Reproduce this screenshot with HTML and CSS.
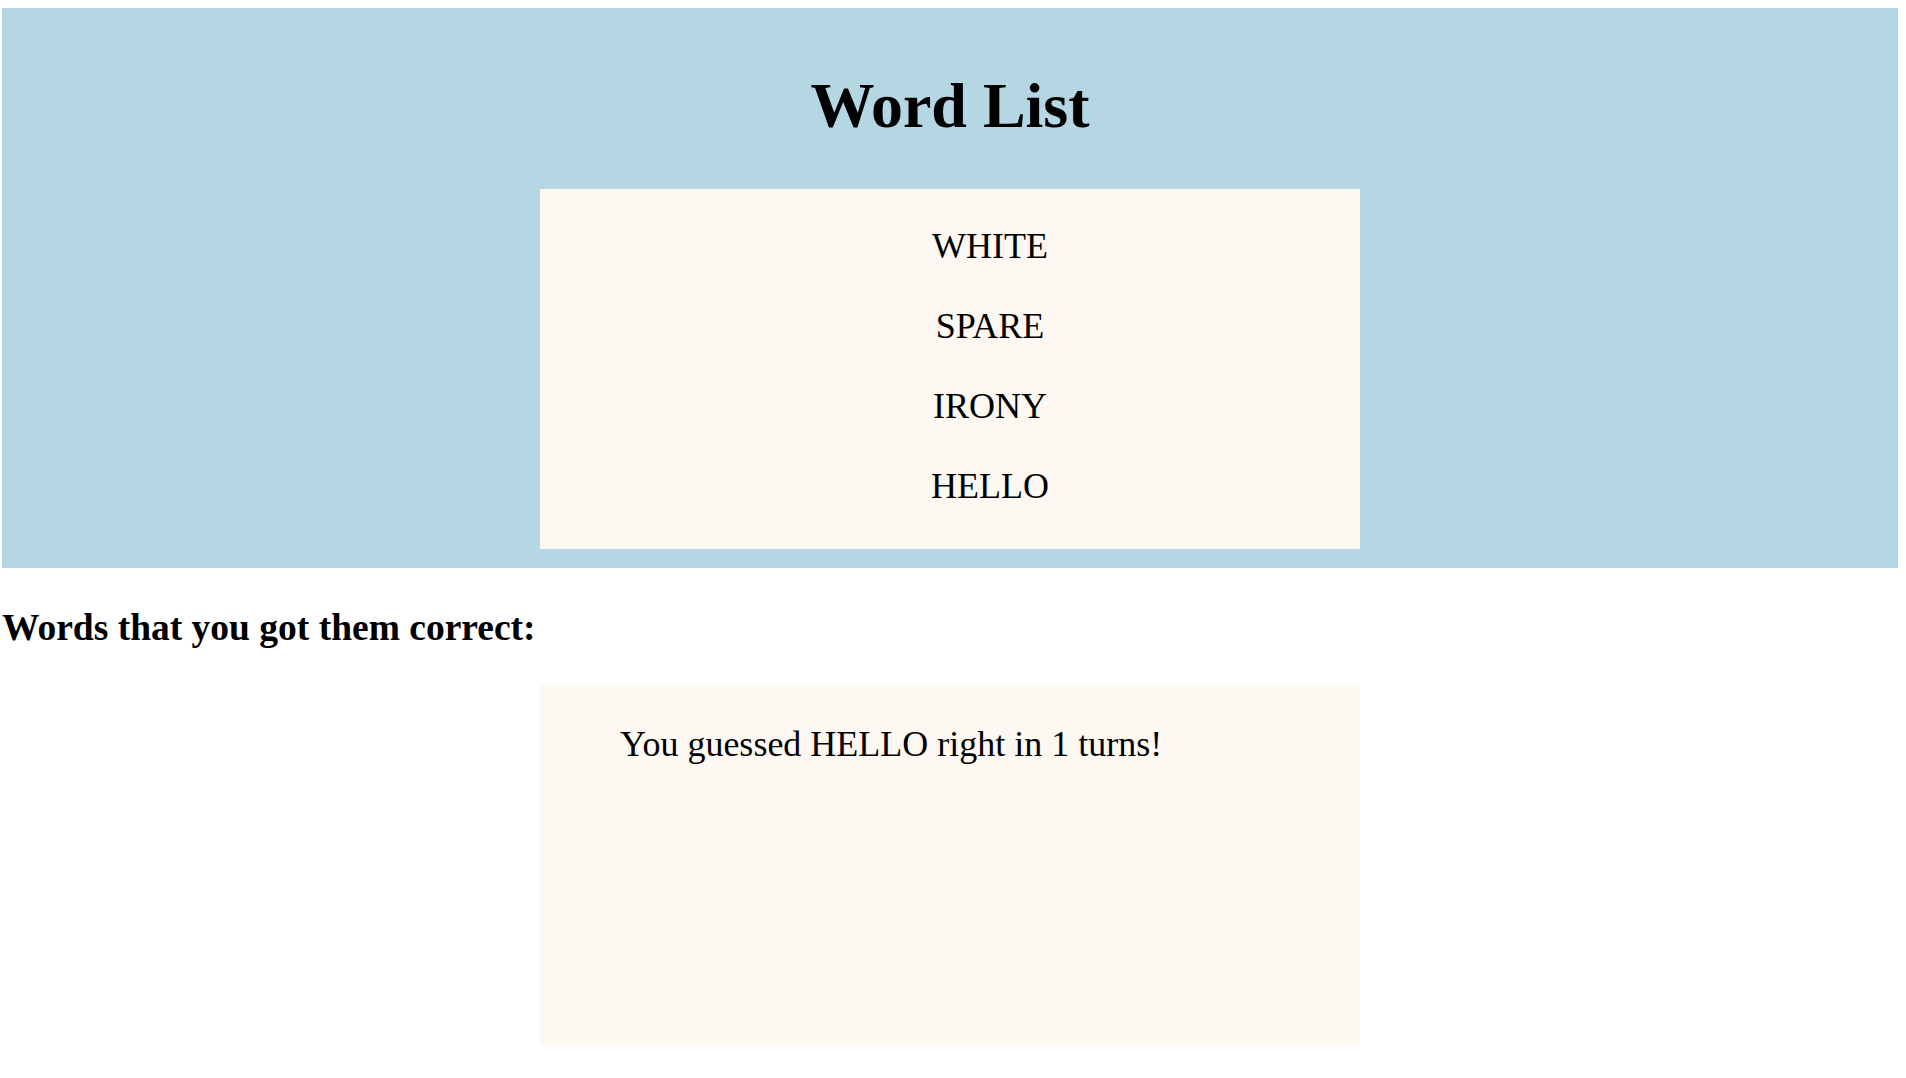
FILE: index.html
```html
<!DOCTYPE html>
<html lang="en">
<head>
<meta charset="utf-8">
<title>Word List</title>
<link rel="stylesheet" href="styles.css">
</head>
<body>
  <section class="header">
    <h1 class="title">Word List</h1>
    <ul class="word-list">
      <li>WHITE</li>
      <li>SPARE</li>
      <li>IRONY</li>
      <li>HELLO</li>
    </ul>
  </section>
  <h2 class="subtitle">Words that you got them correct:</h2>
  <div class="results">
    <p class="result">You guessed HELLO right in 1 turns!</p>
  </div>
</body>
</html>
```
FILE: styles.css
```css
html, body {
  background: #ffffff;
}
body {
  margin: 8px 8px 8px 2px;
  font-family: "Liberation Serif", "Times New Roman", serif;
  color: #000;
}
.header {
  background: #b4d7e3;
  padding: 18px 0 20px;
  height: 560px;
  box-sizing: border-box;
}
.title {
  font-size: 64px;
  font-weight: bold;
  text-align: center;
  margin: 43px 0 46px;
  line-height: normal;
}
.word-list {
  list-style: none;
  width: 820px;
  height: 360px;
  box-sizing: border-box;
  margin: 0 auto;
  padding: 37px 0 0 80px;
  background: #fdf8f1;
  text-align: center;
}
.word-list li {
  font-size: 36px;
  line-height: 40px;
  margin-bottom: 40px;
}
.subtitle {
  font-size: 37.5px;
  font-weight: bold;
  margin: 38px 0 36px;
  line-height: normal;
}
.results {
  width: 820px;
  height: 360px;
  box-sizing: border-box;
  margin: 0 auto;
  padding: 38px 0 0 80px;
  background: #fdf8f1;
}
.result {
  margin: 0;
  font-size: 36px;
  line-height: normal;
}
```
